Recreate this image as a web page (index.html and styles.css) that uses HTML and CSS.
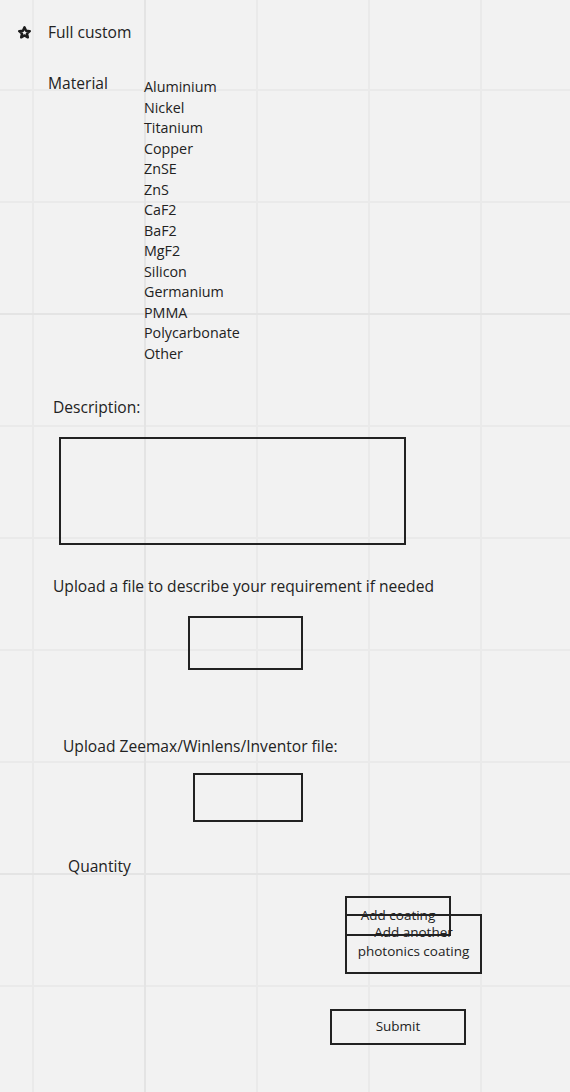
FILE: index.html
```html
<!DOCTYPE html>
<html lang="en">
<head>
<meta charset="utf-8">
<title>Full custom</title>
<link rel="stylesheet" href="styles.css">
</head>
<body>
<main class="board">
  <div class="title-row">
    <svg class="star" width="13" height="13" viewBox="0 0 24 24" aria-hidden="true">
      <path d="M12 2.5l2.9 6.3 6.8.7-5.1 4.6 1.5 6.8L12 17.4l-6.1 3.5 1.5-6.8-5.1-4.6 6.8-.7z" fill="none" stroke="#1c1c1c" stroke-width="4.5" stroke-linejoin="round"/>
    </svg>
    <span class="title">Full custom</span>
  </div>

  <div class="material-row">
    <div class="label material-label">Material</div>
    <ul class="material-list">
      <li>Aluminium</li>
      <li>Nickel</li>
      <li>Titanium</li>
      <li>Copper</li>
      <li>ZnSE</li>
      <li>ZnS</li>
      <li>CaF2</li>
      <li>BaF2</li>
      <li>MgF2</li>
      <li>Silicon</li>
      <li>Germanium</li>
      <li>PMMA</li>
      <li>Polycarbonate</li>
      <li>Other</li>
    </ul>
  </div>

  <div class="label desc-label">Description:</div>
  <div class="box desc-box"></div>

  <div class="label upload-label">Upload a file to describe your requirement if needed</div>
  <div class="box upload-box"></div>

  <div class="label zeemax-label">Upload Zeemax/Winlens/Inventor file:</div>
  <div class="box zeemax-box"></div>

  <div class="label qty-label">Quantity</div>

  <div class="coating-group">
    <div class="box btn add-coating">Add coating</div>
    <div class="box btn add-another">Add another<br>photonics coating</div>
  </div>

  <div class="box btn submit">Submit</div>
</main>
</body>
</html>
```

FILE: styles.css
```css
html, body {
  margin: 0;
  padding: 0;
}

body {
  width: 570px;
  min-height: 1092px;
  background-color: #f2f2f2;
  background-image:
    linear-gradient(to right, #e4e4e4 2px, transparent 2px),
    linear-gradient(to bottom, #e4e4e4 2px, transparent 2px),
    linear-gradient(to right, #eaeaea 2px, transparent 2px),
    linear-gradient(to bottom, #eaeaea 2px, transparent 2px);
  background-size: 560px 560px, 560px 560px, 112px 112px, 112px 112px;
  background-position: 144px 313px, 144px 313px, 32px 89px, 32px 89px;
  font-family: "Open Sans", "Noto Sans", sans-serif;
  color: #222;
}

.board {
  padding-top: 22px;
  padding-bottom: 48px;
}

.title-row {
  display: flex;
  align-items: center;
  height: 20px;
  padding-left: 18px;
  gap: 17px;
}

.star {
  display: block;
}

.title,
.label {
  font-size: 15.6px;
  line-height: 20px;
}

.material-row {
  display: flex;
  margin-top: 31px;
  padding-left: 48px;
}

.material-label {
  width: 96px;
}

.material-list {
  list-style: none;
  margin: 4px 0 0;
  padding: 0;
  font-size: 14.3px;
  line-height: 20.5px;
}

.desc-label {
  margin-top: 33px;
  padding-left: 53px;
}

.box {
  box-sizing: border-box;
  border: 2px solid #222;
}

.desc-box {
  margin: 20px 0 0 59px;
  width: 347px;
  height: 108px;
}

.upload-label {
  margin-top: 31px;
  padding-left: 53px;
}

.upload-box {
  margin: 20px 0 0 188px;
  width: 115px;
  height: 54px;
}

.zeemax-label {
  margin-top: 66px;
  padding-left: 63px;
}

.zeemax-box {
  margin: 17px 0 0 193px;
  width: 110px;
  height: 49px;
}

.qty-label {
  margin-top: 34px;
  padding-left: 68px;
}

.btn {
  display: flex;
  align-items: center;
  justify-content: center;
  text-align: center;
  font-size: 13.5px;
  line-height: 19px;
}

.coating-group {
  position: relative;
  margin: 20px 0 0 345px;
  width: 137px;
  height: 78px;
}

.add-coating {
  width: 106px;
  height: 40px;
  padding-bottom: 2px;
}

.add-another {
  position: absolute;
  left: 0;
  top: 18px;
  width: 137px;
  height: 60px;
  padding-bottom: 4px;
}

.submit {
  margin: 35px 0 0 330px;
  width: 136px;
  height: 36px;
  padding-bottom: 2px;
}
```
